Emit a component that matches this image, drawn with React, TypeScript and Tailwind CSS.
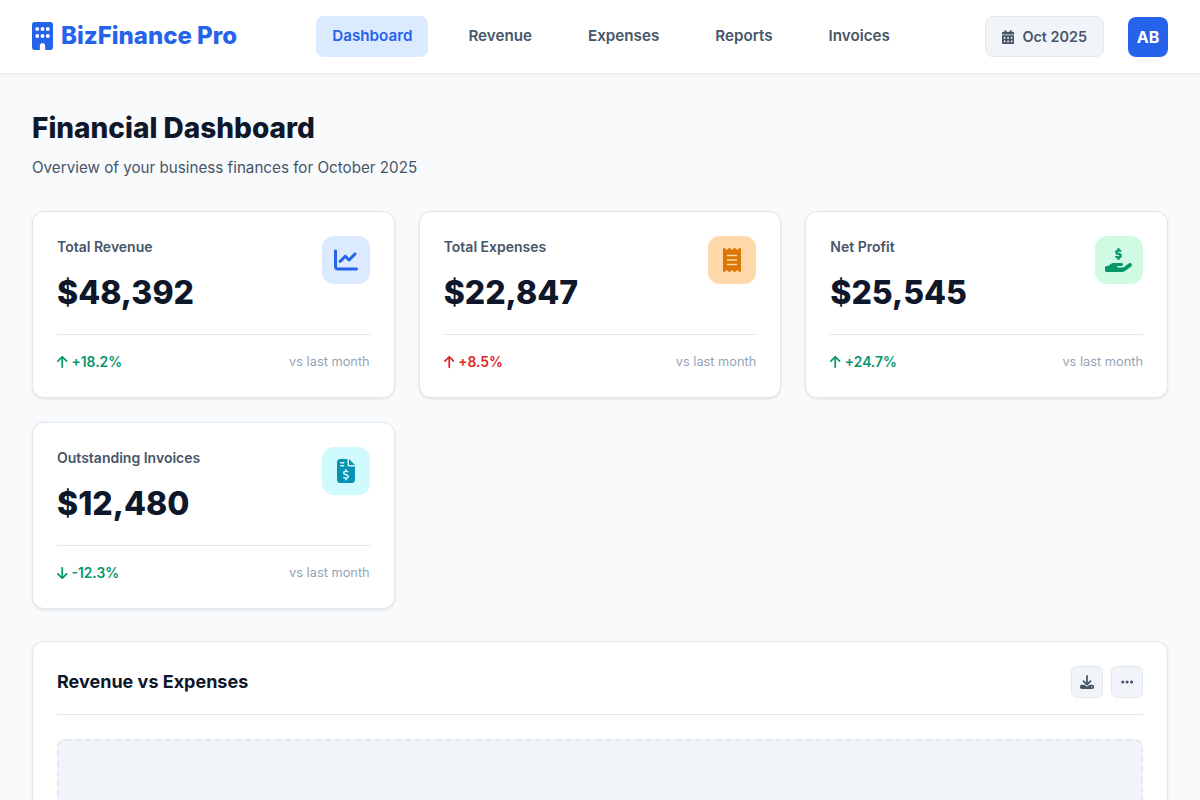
import React from 'react';
import {
  FaBuilding, FaCalendarDays, FaChartLine, FaReceipt, FaHandHoldingDollar,
  FaFileInvoiceDollar, FaArrowUp, FaArrowDown, FaDownload, FaEllipsis,
} from 'react-icons/fa6';

const NAV = ['Dashboard', 'Revenue', 'Expenses', 'Reports', 'Invoices'];

const STATS = [
  {
    label: 'Total Revenue', value: '$48,392', change: '+18.2%', up: true,
    icon: FaChartLine, iconSize: 'w-6 h-6', iconBox: 'bg-[#dbeafe] text-[#2563eb]', changeColor: 'text-[#059669]',
  },
  {
    label: 'Total Expenses', value: '$22,847', change: '+8.5%', up: true,
    icon: FaReceipt, iconSize: 'w-[18px] h-6', iconBox: 'bg-[#fed7aa] text-[#d97706]', changeColor: 'text-[#dc2626]',
  },
  {
    label: 'Net Profit', value: '$25,545', change: '+24.7%', up: true,
    icon: FaHandHoldingDollar, iconSize: 'w-[27px] h-6', iconBox: 'bg-[#d1fae5] text-[#059669]', changeColor: 'text-[#059669]',
  },
  {
    label: 'Outstanding Invoices', value: '$12,480', change: '-12.3%', up: false,
    icon: FaFileInvoiceDollar, iconSize: 'w-[18px] h-6', iconBox: 'bg-[#cffafe] text-[#0891b2]', changeColor: 'text-[#059669]',
  },
];

export default function App() {
  return (
    <div className="min-h-screen bg-[#f8fafc] font-['Inter',sans-serif] text-[#0f172a]">
      <header className="h-[73px] bg-white shadow-[0_1px_3px_rgba(0,0,0,0.1)] px-8 flex items-center justify-between">
        <div className="flex items-center gap-2 pb-[2px] text-[#2563eb] text-2xl leading-[38px] font-extrabold">
          <FaBuilding className="w-[21px] h-7" />
          <span>BizFinance Pro</span>
        </div>
        <nav className="flex items-center gap-6">
          {NAV.map((item, i) => (
            <a
              key={item}
              className={
                i === 0
                  ? 'h-[41px] px-4 pb-px flex items-center rounded-lg text-[15.2px] font-semibold bg-[#dbeafe] text-[#2563eb]'
                  : 'h-[41px] px-4 pb-px flex items-center rounded-lg text-[15.2px] font-semibold text-[#475569]'
              }
            >
              {item}
            </a>
          ))}
        </nav>
        <div className="flex items-center gap-6">
          <div className="h-[41px] px-4 flex items-center gap-2 rounded-lg bg-[#f1f5f9] border border-[#e2e8f0] text-[14.4px] font-semibold text-[#475569]">
            <FaCalendarDays className="w-[12.25px] h-3.5" />
            <span>Oct 2025</span>
          </div>
          <div className="w-10 h-10 rounded-lg bg-[#2563eb] text-white flex items-center justify-center font-bold">AB</div>
        </div>
      </header>

      <main className="p-8">
        <h1 className="text-[28px] leading-[46px] font-extrabold">Financial Dashboard</h1>
        <p className="mt-[5px] text-[15.2px] leading-[23px] text-[#475569]">Overview of your business finances for October 2025</p>

        <div className="mt-8 grid grid-cols-3 gap-6">
          {STATS.map(({ label, value, change, up, icon: Icon, iconSize, iconBox, changeColor }) => (
            <div key={label} className="h-[187px] bg-white border border-[#e2e8f0] rounded-xl p-6 shadow-[0_1px_3px_rgba(0,0,0,0.1)]">
              <div className="h-[99px] flex justify-between items-start border-b border-[#e2e8f0]">
                <div>
                  <div className="text-sm leading-[22px] font-semibold text-[#475569]">{label}</div>
                  <div className="mt-[9px] text-[32px] leading-[51px] font-extrabold">{value}</div>
                </div>
                <div className={`w-12 h-12 rounded-xl flex items-center justify-center ${iconBox}`}>
                  <Icon className={iconSize} />
                </div>
              </div>
              <div className="mt-4 flex items-center justify-between">
                <div className={`flex items-center gap-1 text-[13.8px] leading-[22px] font-semibold ${changeColor}`}>
                  {up ? <FaArrowUp className="w-[10.5px] h-3.5" /> : <FaArrowDown className="w-[10.5px] h-3.5" />}
                  <span>{change}</span>
                </div>
                <span className="text-[12.8px] text-[#94a3b8]">vs last month</span>
              </div>
            </div>
          ))}
        </div>

        <section className="mt-8 bg-white border border-[#e2e8f0] rounded-xl p-6 shadow-[0_1px_3px_rgba(0,0,0,0.1)]">
          <div className="flex items-center justify-between pb-4 border-b border-[#e2e8f0]">
            <h2 className="text-lg font-bold">Revenue vs Expenses</h2>
            <div className="flex items-center gap-2">
              <button className="w-8 h-8 rounded-md bg-[#f1f5f9] border border-[#e2e8f0] text-[#475569] flex items-center justify-center">
                <FaDownload className="w-3.5 h-3.5" />
              </button>
              <button className="w-8 h-8 rounded-md bg-[#f1f5f9] border border-[#e2e8f0] text-[#475569] flex items-center justify-center">
                <FaEllipsis className="w-[12.25px] h-3.5" />
              </button>
            </div>
          </div>
          <div className="mt-6 h-[300px] rounded-lg bg-[#f1f5f9] border-2 border-dashed border-[#e2e8f0]" />
        </section>
      </main>
    </div>
  );
}
